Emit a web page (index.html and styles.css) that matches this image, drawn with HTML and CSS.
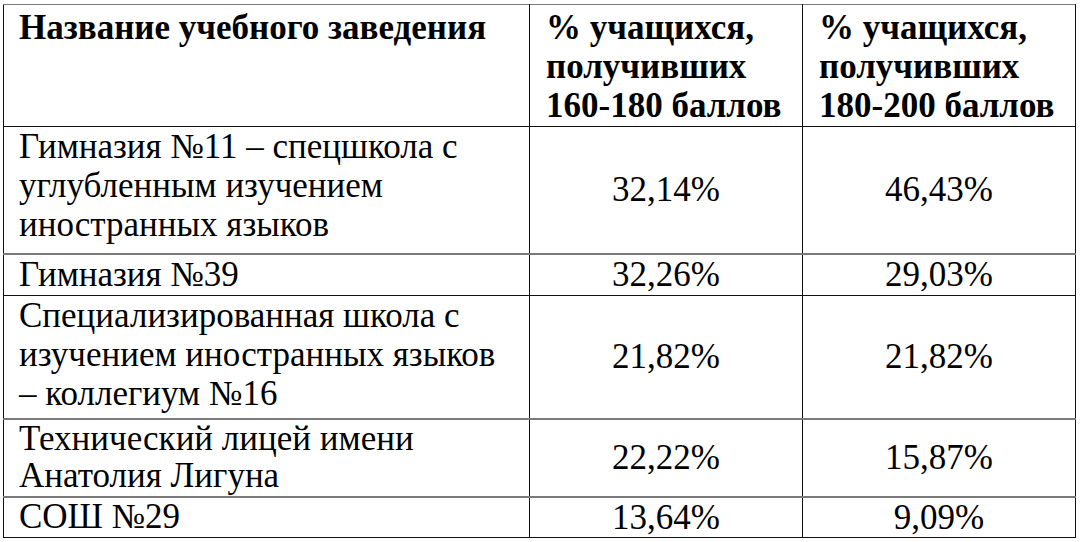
FILE: index.html
```html
<!DOCTYPE html>
<html lang="ru">
<head>
<meta charset="utf-8">
<title>Таблица</title>
<link rel="stylesheet" href="styles.css">
</head>
<body>
<table class="results">
  <colgroup>
    <col class="col-name">
    <col class="col-val">
    <col class="col-val">
  </colgroup>
  <thead>
    <tr class="row-head">
      <th class="cell-name">Название учебного заведения</th>
      <th class="cell-headval">% учащихся, получивших 160-180 баллов</th>
      <th class="cell-headval">% учащихся, получивших 180-200 баллов</th>
    </tr>
  </thead>
  <tbody>
    <tr class="row-1">
      <td class="cell-name">Гимназия №11 – спецшкола с углубленным изучением иностранных языков</td>
      <td class="cell-val">32,14%</td>
      <td class="cell-val">46,43%</td>
    </tr>
    <tr class="row-2 gray-top">
      <td class="cell-name">Гимназия №39</td>
      <td class="cell-val">32,26%</td>
      <td class="cell-val">29,03%</td>
    </tr>
    <tr class="row-3">
      <td class="cell-name">Специализированная школа с изучением иностранных языков – коллегиум №16</td>
      <td class="cell-val">21,82%</td>
      <td class="cell-val">21,82%</td>
    </tr>
    <tr class="row-4 gray-top">
      <td class="cell-name">Технический лицей имени Анатолия Лигуна</td>
      <td class="cell-val">22,22%</td>
      <td class="cell-val">15,87%</td>
    </tr>
    <tr class="row-5 gray-top">
      <td class="cell-name">СОШ №29</td>
      <td class="cell-val">13,64%</td>
      <td class="cell-val">9,09%</td>
    </tr>
  </tbody>
</table>
</body>
</html>
```

FILE: styles.css
```css
html, body {
  margin: 0;
  padding: 0;
  background: #ffffff;
}

body {
  padding: 4px 0 0 3px;
  color: #000000;
}

.results {
  border-collapse: collapse;
  table-layout: fixed;
  width: 1073px;
  font-family: "Liberation Serif", Tinos, "Times New Roman", Times, "Noto Serif", "DejaVu Serif", serif;
  font-size: 35px;
  line-height: 39px;
}

.col-name { width: 526px; }
.col-val { width: 273px; }

.results th,
.results td {
  font-family: inherit;
  border: 1.5px solid #111111;
  padding: 0 14px 0 15px;
  text-align: left;
  vertical-align: top;
}

.results thead th {
  border-top-color: #7a7a7a;
  font-weight: bold;
  padding-top: 3px;
}

.results th.cell-headval {
  padding-left: 16px;
  padding-right: 8px;
}

.results td.cell-val {
  text-align: center;
  vertical-align: middle;
  padding: 0;
}

.gray-top td {
  border-top: 2px solid #7a7a7a;
}

.row-head { height: 122px; }
.row-1 { height: 127px; }
.row-2 { height: 42px; }
.row-3 { height: 123px; }
.row-4 { height: 78px; }
.row-5 { height: 39px; }

.row-4 .cell-name,
.row-5 .cell-name {
  line-height: 37px;
}
```
